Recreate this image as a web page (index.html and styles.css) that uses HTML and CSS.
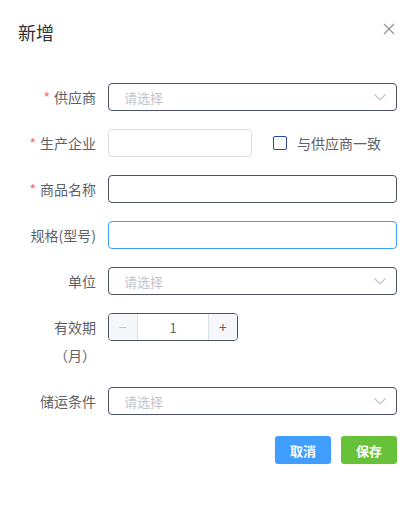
FILE: index.html
```html
<!DOCTYPE html>
<html lang="zh-CN">
  <head>
    <meta charset="UTF-8" />
    <meta name="viewport" content="width=device-width, initial-scale=1.0" />
    <title>新增</title>
    <link rel="stylesheet" href="styles.css">
  </head>
  <body>
    <div class="dialog">
      <div class="dialog-header">
        <span class="dialog-title">新增</span>
        <button class="close-btn" aria-label="关闭">
          <svg width="12" height="12" viewBox="0 0 12 12">
            <path d="M1 1 L11 11 M11 1 L1 11" stroke="#909399" stroke-width="1.2" fill="none" />
          </svg>
        </button>
      </div>

      <div class="dialog-body">
        <div class="form-item">
          <label class="form-label required">供应商</label>
          <div class="form-content">
            <div class="select">
              <span class="placeholder">请选择</span>
              <svg class="arrow" width="12" height="7" viewBox="0 0 12 7">
                <path d="M0.5 0.5 L6 6 L11.5 0.5" stroke="#c0c4cc" stroke-width="1.1" fill="none" />
              </svg>
            </div>
          </div>
        </div>

        <div class="form-item">
          <label class="form-label required">生产企业</label>
          <div class="form-content">
            <input class="input short light" type="text" />
            <label class="checkbox">
              <span class="checkbox-box"></span>
              <span class="checkbox-text">与供应商一致</span>
            </label>
          </div>
        </div>

        <div class="form-item">
          <label class="form-label required">商品名称</label>
          <div class="form-content">
            <input class="input" type="text" />
          </div>
        </div>

        <div class="form-item">
          <label class="form-label">规格(型号)</label>
          <div class="form-content">
            <input class="input focused" type="text" />
          </div>
        </div>

        <div class="form-item">
          <label class="form-label">单位</label>
          <div class="form-content">
            <div class="select">
              <span class="placeholder">请选择</span>
              <svg class="arrow" width="12" height="7" viewBox="0 0 12 7">
                <path d="M0.5 0.5 L6 6 L11.5 0.5" stroke="#c0c4cc" stroke-width="1.1" fill="none" />
              </svg>
            </div>
          </div>
        </div>

        <div class="form-item">
          <label class="form-label">有效期<br>（月）</label>
          <div class="form-content">
            <div class="number">
              <span class="num-btn minus">−</span>
              <span class="num-value">1</span>
              <span class="num-btn plus">+</span>
            </div>
          </div>
        </div>

        <div class="form-item">
          <label class="form-label">储运条件</label>
          <div class="form-content">
            <div class="select">
              <span class="placeholder">请选择</span>
              <svg class="arrow" width="12" height="7" viewBox="0 0 12 7">
                <path d="M0.5 0.5 L6 6 L11.5 0.5" stroke="#c0c4cc" stroke-width="1.1" fill="none" />
              </svg>
            </div>
          </div>
        </div>

        <div class="footer">
          <button class="btn btn-blue">取消</button>
          <button class="btn btn-green">保存</button>
        </div>
      </div>
    </div>
  </body>
</html>
```

FILE: styles.css
```css
body {
  margin: 0;
  background: #fff;
  font-family: "Noto Sans CJK SC", "Noto Sans", sans-serif;
  color: #606266;
}

.dialog {
  width: 414px;
  box-sizing: border-box;
}

.dialog-header {
  display: flex;
  justify-content: space-between;
  align-items: flex-start;
  padding: 20px 18px 9px 18px;
}

.dialog-title {
  font-size: 18px;
  line-height: 24px;
  color: #303133;
}

.close-btn {
  border: none;
  background: none;
  padding: 0;
  margin: 3px 1px 0 0;
  width: 12px;
  height: 12px;
  display: flex;
  cursor: pointer;
}

.dialog-body {
  padding: 30px 17px 30px 16px;
}

.form-item {
  display: flex;
  align-items: flex-start;
  margin-bottom: 18px;
}

.form-label {
  width: 92px;
  flex-shrink: 0;
  box-sizing: border-box;
  padding-right: 12px;
  text-align: right;
  font-size: 14px;
  line-height: 28px;
  color: #606266;
}

.form-label.required::before {
  content: "*";
  color: #f56c6c;
  margin-right: 4px;
}

.form-content {
  flex: 1;
  display: flex;
  align-items: center;
  height: 28px;
}

.input,
.select {
  width: 100%;
  height: 28px;
  box-sizing: border-box;
  border: 1px solid #4d5261;
  border-radius: 4px;
  padding: 0 15px;
  font-size: 13px;
  outline: none;
  background: #fff;
}

.input.short {
  width: 144px;
}

.input.light {
  border-color: #dcdfe6;
}

.input.focused {
  border-color: #409eff;
}

.select {
  display: flex;
  align-items: center;
  justify-content: space-between;
  padding-right: 10px;
}

.placeholder {
  color: #c0c4cc;
  font-size: 13px;
}

.checkbox {
  display: flex;
  align-items: center;
  margin-left: 21px;
  font-size: 14px;
  color: #606266;
}

.checkbox-box {
  width: 14px;
  height: 14px;
  box-sizing: border-box;
  border: 1px solid #2947a8;
  border-radius: 2px;
  margin-right: 10px;
}

.number {
  display: flex;
  width: 130px;
  height: 28px;
  box-sizing: border-box;
  border: 1px solid #4d5261;
  border-radius: 4px;
  overflow: hidden;
}

.num-btn {
  width: 28px;
  display: flex;
  align-items: center;
  justify-content: center;
  background: #f5f7fa;
  font-size: 14px;
}

.num-btn.minus {
  border-right: 1px solid #dcdfe6;
  color: #c0c4cc;
}

.num-btn.plus {
  border-left: 1px solid #dcdfe6;
  color: #606266;
}

.num-value {
  flex: 1;
  display: flex;
  align-items: center;
  justify-content: center;
  font-size: 13px;
  color: #606266;
}

.footer {
  display: flex;
  justify-content: flex-end;
  gap: 10px;
  padding-top: 3px;
}

.btn {
  width: 56px;
  height: 28px;
  border: none;
  border-radius: 3px;
  color: #fff;
  font-size: 13px;
  font-family: inherit;
  font-weight: bold;
  padding: 0;
  cursor: pointer;
}

.btn-blue {
  background: #409eff;
}

.btn-green {
  background: #67c23a;
}
```
